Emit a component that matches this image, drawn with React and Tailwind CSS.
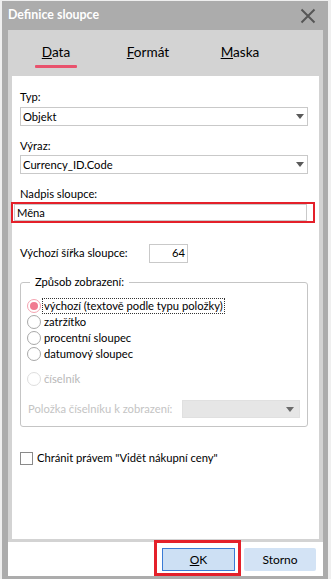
import React from 'react';

const Arrow = ({ color = '#5a5a5a' }) => (
  <svg width="8" height="5" viewBox="0 0 8 5" className="shrink-0">
    <path d="M0 0 H8 L4 5 Z" fill={color} />
  </svg>
);

const Select = ({ value }) => (
  <div className="flex items-center h-[19px] w-[288px] border border-[#c9c9c9] bg-white pl-[2px] pr-[3px]">
    <span className="flex-1 leading-none">{value}</span>
    <Arrow />
  </div>
);

const Radio = ({ label, checked, disabled, focused }) => (
  <div className="flex items-center h-[16px]">
    <span
      className={`w-[14px] h-[14px] rounded-full border flex items-center justify-center bg-white ${
        checked ? 'border-[#f4a3b0]' : disabled ? 'border-[#dedede]' : 'border-[#a8a8a8]'
      }`}
    >
      {checked && <span className="w-[8px] h-[8px] rounded-full bg-[#f07a90]" />}
    </span>
    <span
      className={`ml-[2px] px-[1px] leading-[14px] whitespace-nowrap ${
        focused ? 'outline-1 outline-dotted outline-[#333]' : ''
      } ${disabled ? 'text-[#b8b8b8]' : 'text-black'}`}
    >
      {label}
    </span>
  </div>
);

const App = () => {
  return (
    <div className="w-[331px] h-[579px] bg-[#efefef] pt-[1px] pl-[2px] font-['Lato',sans-serif] text-[11.2px] text-black overflow-hidden">
      <div className="w-[326px] h-[578px] bg-[#acacac] flex flex-col">
        {/* titulek */}
        <div className="h-[29px] flex items-center justify-between pl-[6px] pr-[12px]">
          <span className="text-white font-bold text-[12.4px]">Definice sloupce</span>
          <svg width="16" height="16" viewBox="0 0 16 16">
            <path d="M1.5 1.5 L14.5 14.5 M14.5 1.5 L1.5 14.5" stroke="#565656" strokeWidth="2" />
          </svg>
        </div>

        <div className="ml-[6px] mr-[5px] flex-1 flex flex-col">
          <div className="bg-[#d3d3d3] flex flex-col">
            {/* záložky */}
            <div className="h-[46px] flex pl-[2px]">
              <div className="w-[92px] flex flex-col items-center pt-[13px]">
                <span className="text-[13.6px] leading-[18px]"><u>D</u>ata</span>
                <span className="mt-[4px] w-[42px] h-[3px] bg-[#e9526d] rounded-[1px]" />
              </div>
              <div className="w-[92px] flex flex-col items-center pt-[13px]">
                <span className="text-[13.6px] leading-[18px]"><u>F</u>ormát</span>
              </div>
              <div className="w-[92px] flex flex-col items-center pt-[13px]">
                <span className="text-[13.6px] leading-[18px]"><u>M</u>aska</span>
              </div>
            </div>

            {/* panel */}
            <div className="ml-[4px] mr-[4px] h-[463px] bg-white pl-[8px] pt-[13px] flex flex-col">
              <div className="leading-[16px]">Typ:</div>
              <div className="mt-[2px]"><Select value="Objekt" /></div>

              <div className="mt-[12px] leading-[16px]">Výraz:</div>
              <div className="mt-[1px]"><Select value="Currency_ID.Code" /></div>

              <div className="mt-[12px] leading-[16px]">Nadpis sloupce:</div>
              <div className="relative mt-[2px] -ml-[6px]">
                <div className="w-[293px] h-[17px] border border-[#c9c9c9] flex items-center pl-[2px] leading-none">
                  Měna
                </div>
                <div className="absolute -left-[3px] -top-[2px] w-[304px] h-[21px] border-[2.5px] border-[#e4202a]" />
              </div>

              <div className="mt-[23px] flex items-center h-[19px]">
                <span className="w-[129px]">Výchozí šířka sloupce:</span>
                <div className="w-[39px] h-[19px] border border-[#c9c9c9] flex items-center justify-end pr-[2px]">
                  64
                </div>
              </div>

              <fieldset className="mt-[11px] w-[288px] border border-[#c5c5c5] rounded-[3px] pl-[6px] pr-[7px] pt-[8px] pb-[8px]">
                <legend className="ml-[3px] px-[5px] leading-[16px]">Způsob zobrazení:</legend>
                <Radio label="výchozí (textově podle typu položky)" checked focused />
                <Radio label="zatržítko" />
                <Radio label="procentní sloupec" />
                <Radio label="datumový sloupec" />
                <div className="mt-[9px]">
                  <Radio label="číselník" disabled />
                </div>
                <div className="mt-[13px] flex items-center h-[18px]">
                  <span className="flex-1 min-w-0 pl-[1px] whitespace-nowrap text-[#c4c4c4]">Položka číselníku k zobrazení:</span>
                  <div className="shrink-0 w-[118px] h-[18px] bg-[#e6e6e6] border border-[#e0e0e0] flex items-center justify-end pr-[5px]">
                    <Arrow color="#6b6b6b" />
                  </div>
                </div>
              </fieldset>

              <div className="mt-[23px] flex items-center h-[16px]">
                <span className="w-[13px] h-[13px] border border-[#8a8a8a] bg-white" />
                <span className="ml-[4px]">Chránit právem "Vidět nákupní ceny"</span>
              </div>
            </div>
            <div className="h-[3px]" />
          </div>

          {/* tlačítka */}
          <div className="h-[34px] bg-white flex items-start justify-end pt-[6px] pr-[7px] gap-[9px]">
            <div className="relative">
              <button className="w-[73px] h-[23px] bg-[#cde0f4] border border-[#3a7bd5] text-[12px] leading-none">
                <u>O</u>K
              </button>
              <div className="absolute -left-[8px] -top-[8px] w-[87px] h-[36px] border-[3px] border-[#e4202a]" />
            </div>
            <button className="w-[72px] h-[23px] bg-[#d3e3f5] rounded-[2px] text-[12px] leading-none">
              Storno
            </button>
          </div>
        </div>
        <div className="h-[3px]" />
      </div>
    </div>
  );
};

export default App;
